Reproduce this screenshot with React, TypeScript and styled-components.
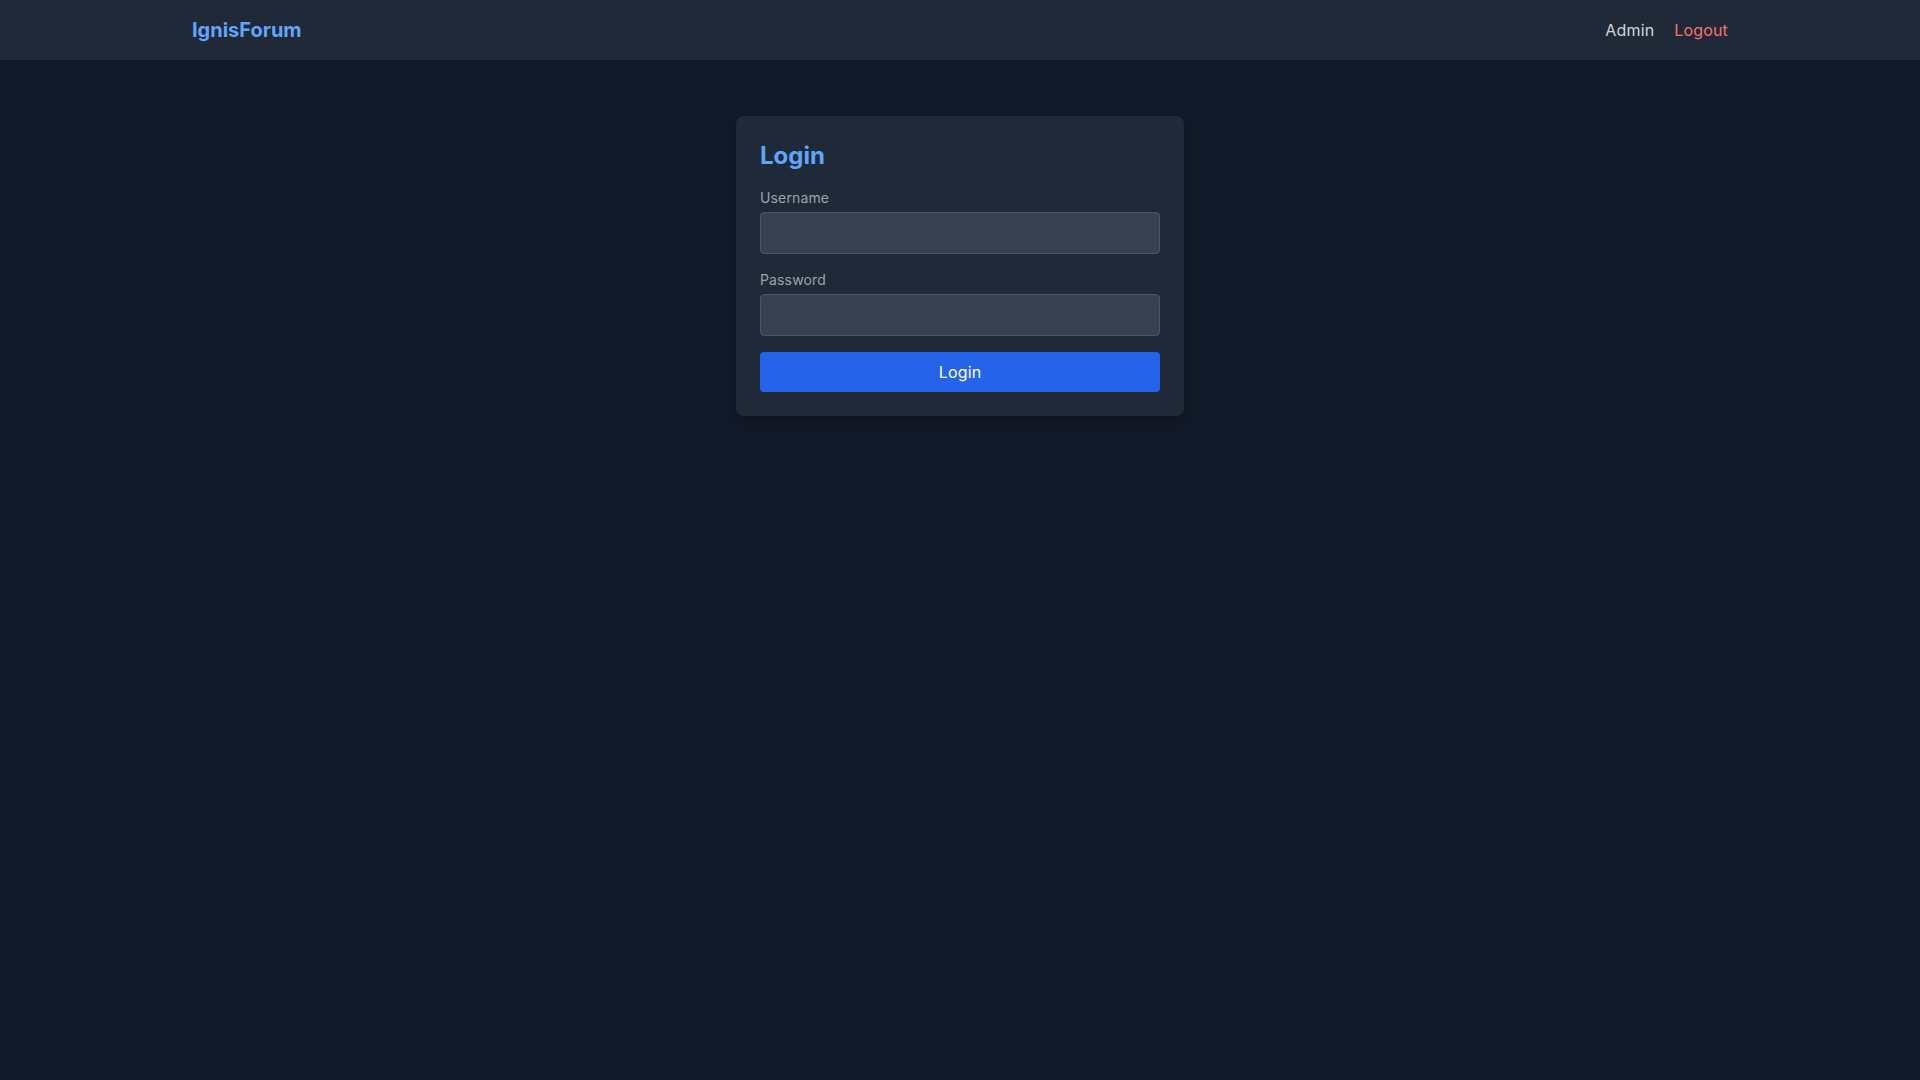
import * as React from "react";
import styled, { createGlobalStyle } from "styled-components";

const GlobalStyle = createGlobalStyle`
  *, *::before, *::after {
    box-sizing: border-box;
  }

  html, body {
    margin: 0;
    padding: 0;
    min-height: 100%;
    background-color: #111827;
  }

  body {
    font-family: Inter, "Noto Sans", sans-serif;
    color: #f3f4f6;
    min-height: 100vh;
  }
`;

const Page = styled.div`
  min-height: 100vh;
  background-color: #111827;
`;

const Header = styled.header`
  background-color: #1f2937;
  padding: 16px 0;
`;

const HeaderInner = styled.div`
  width: 100%;
  max-width: 1536px;
  margin: 0 auto;
  display: flex;
  align-items: center;
  justify-content: space-between;
`;

const Brand = styled.a`
  font-size: 20px;
  line-height: 28px;
  font-weight: 700;
  color: #60a5fa;
  text-decoration: none;
`;

const Nav = styled.nav`
  display: flex;
  align-items: center;
  gap: 20px;
`;

const NavLink = styled.a<{ $danger?: boolean }>`
  font-size: 16px;
  line-height: 24px;
  letter-spacing: 0.01em;
  color: ${(p) => (p.$danger ? "#f87171" : "#d1d5db")};
  text-decoration: none;
`;

const Main = styled.main`
  padding: 56px 0 32px;
  display: flex;
  justify-content: center;
`;

const Card = styled.form`
  width: 448px;
  background-color: #1f2937;
  border-radius: 8px;
  padding: 24px;
  box-shadow: 0 4px 6px -1px rgba(0, 0, 0, 0.1), 0 2px 4px -2px rgba(0, 0, 0, 0.1);
`;

const Title = styled.h2`
  margin: 0 0 16px;
  font-size: 24px;
  line-height: 32px;
  font-weight: 700;
  color: #60a5fa;
`;

const Field = styled.div`
  margin-bottom: 16px;
`;

const Label = styled.label`
  display: block;
  margin-bottom: 4px;
  font-size: 14px;
  line-height: 20px;
  letter-spacing: 0.01em;
  color: #9ca3af;
`;

const Input = styled.input`
  display: block;
  width: 100%;
  padding: 8px 12px;
  font-family: inherit;
  font-size: 16px;
  line-height: 24px;
  color: #f3f4f6;
  background-color: #374151;
  border: 1px solid #4b5563;
  border-radius: 4px;
  outline: none;
`;

const SubmitButton = styled.button`
  display: block;
  width: 100%;
  padding: 8px 16px;
  font-family: inherit;
  font-size: 16px;
  line-height: 24px;
  letter-spacing: 0.01em;
  color: #ffffff;
  background-color: #2563eb;
  border: none;
  border-radius: 4px;
  cursor: pointer;
`;

export default function App() {
  return (
    <Page>
      <GlobalStyle />
      <Header>
        <HeaderInner>
          <Brand href="#">IgnisForum</Brand>
          <Nav>
            <NavLink href="#">Admin</NavLink>
            <NavLink href="#" $danger>
              Logout
            </NavLink>
          </Nav>
        </HeaderInner>
      </Header>
      <Main>
        <Card onSubmit={(e) => e.preventDefault()}>
          <Title>Login</Title>
          <Field>
            <Label htmlFor="username">Username</Label>
            <Input id="username" type="text" />
          </Field>
          <Field>
            <Label htmlFor="password">Password</Label>
            <Input id="password" type="password" />
          </Field>
          <SubmitButton type="submit">Login</SubmitButton>
        </Card>
      </Main>
    </Page>
  );
}
